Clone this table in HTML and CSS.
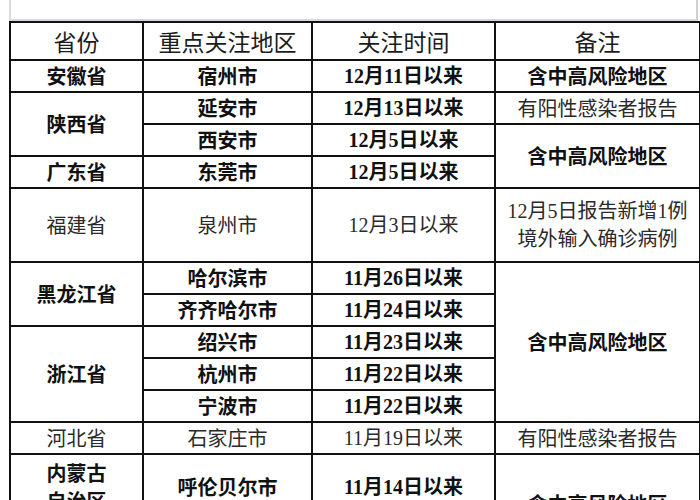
FILE: index.html
```html
<!DOCTYPE html>
<html lang="zh-CN">
<head>
<meta charset="utf-8">
<link rel="stylesheet" href="styles.css">
</head>
<body>
<div class="topbox"></div>
<table class="t">
<colgroup><col class="c1"><col class="c2"><col class="c3"><col class="c4"></colgroup>
<thead>
<tr class="hd"><th>省份</th><th>重点关注地区</th><th>关注时间</th><th>备注</th></tr>
</thead>
<tbody>
<tr class="b"><td>安徽省</td><td>宿州市</td><td class="d">12月11日以来</td><td>含中高风险地区</td></tr>
<tr class="b"><td rowspan="2">陕西省</td><td>延安市</td><td class="d">12月13日以来</td><td class="reg">有阳性感染者报告</td></tr>
<tr class="b"><td>西安市</td><td class="d">12月5日以来</td><td rowspan="2">含中高风险地区</td></tr>
<tr class="b"><td>广东省</td><td>东莞市</td><td class="d">12月5日以来</td></tr>
<tr class="r tall"><td>福建省</td><td>泉州市</td><td class="d">12月3日以来</td><td class="d note">12月5日报告新增1例<br>境外输入确诊病例</td></tr>
<tr class="b"><td rowspan="2">黑龙江省</td><td>哈尔滨市</td><td class="d">11月26日以来</td><td rowspan="5">含中高风险地区</td></tr>
<tr class="b"><td>齐齐哈尔市</td><td class="d">11月24日以来</td></tr>
<tr class="b"><td rowspan="3">浙江省</td><td>绍兴市</td><td class="d">11月23日以来</td></tr>
<tr class="b"><td>杭州市</td><td class="d">11月22日以来</td></tr>
<tr class="b"><td>宁波市</td><td class="d">11月22日以来</td></tr>
<tr class="r"><td>河北省</td><td>石家庄市</td><td class="d">11月19日以来</td><td>有阳性感染者报告</td></tr>
<tr class="b im"><td class="two">内蒙古<br>自治区</td><td>呼伦贝尔市</td><td class="d">11月14日以来</td><td class="low">含中高风险地区</td></tr>
</tbody>
</table>
</body>
</html>
```

FILE: styles.css
```css
html, body {
  margin: 0;
  padding: 0;
  background: #ffffff;
}

body {
  font-family: "Noto Sans CJK SC", "Noto Sans", sans-serif;
  color: #141414;
  width: 700px;
  height: 500px;
  overflow: hidden;
}

.topbox {
  margin-left: 9px;
  width: 685px;
  height: 19px;
  border-left: 2px solid #dcdce2;
  border-right: 2px solid #d0d0d0;
  border-bottom: 2px solid #d6d6e6;
}

.t {
  margin-left: 9px;
  width: 690px;
  border-collapse: collapse;
  table-layout: fixed;
}

.c1 { width: 133px; }
.c2 { width: 169px; }
.c3 { width: 183px; }
.c4 { width: 205px; }

.t th,
.t td {
  border: 2px solid #111111;
  padding: 0;
  text-align: center;
  vertical-align: middle;
  white-space: nowrap;
}

.hd th {
  height: 36px;
  font-size: 23px;
  font-weight: 400;
  line-height: 36px;
  color: #1c1c1c;
}

.t td {
  height: 30px;
  font-size: 20px;
  line-height: 28px;
}

.b td {
  font-weight: 700;
  color: #111111;
}

.b td.reg,
.r td {
  font-weight: 400;
  color: #2a2a2a;
}

.d {
  font-family: "Liberation Serif", "Noto Sans CJK SC", serif;
}

.tall td {
  height: 72px;
}

.note {
  line-height: 28px;
}

.im td {
  height: auto;
}

.im td.two {
  line-height: 28px;
  padding: 3px 0;
}

.im td.low {
  vertical-align: top;
  padding-top: 35px;
}
```
